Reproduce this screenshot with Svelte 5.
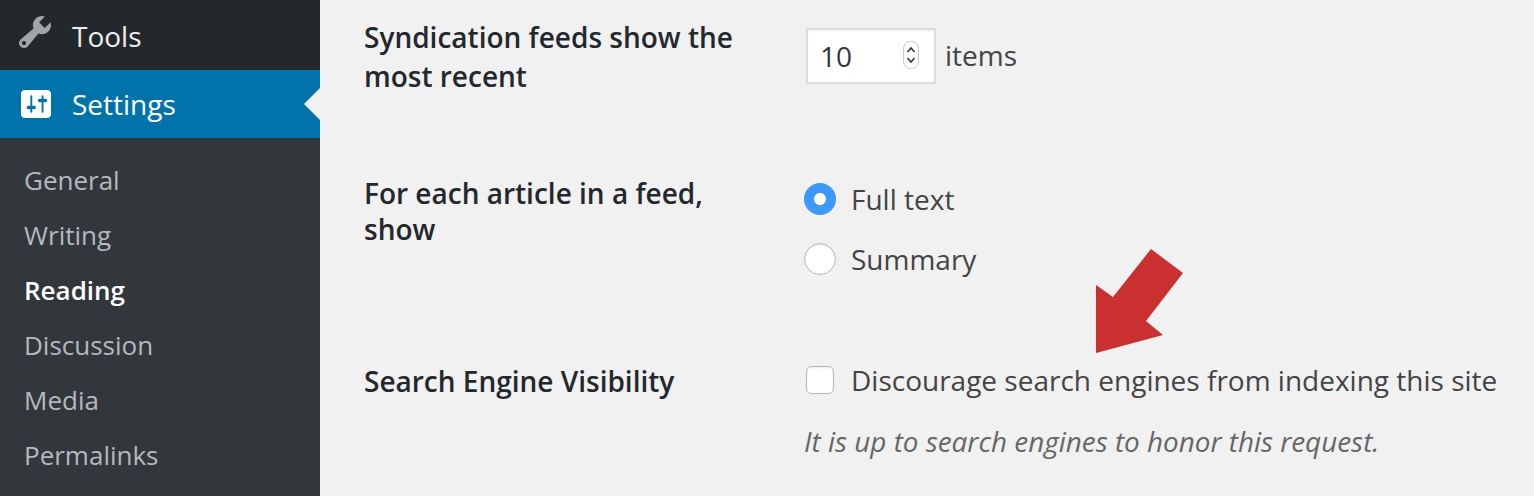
<script>
  const submenu = ['General', 'Writing', 'Reading', 'Discussion', 'Media', 'Permalinks'];
  let feedMode = $state('full');
</script>

<div class="page">
  <aside class="sidebar">
    <div class="menu-item tools">
      <svg class="ico ico-tools" viewBox="0 0 20 20"><path d="M16.68 9.77c-1.34 1.34-3.3 1.67-4.95.99l-5.41 6.52c-.99.99-2.59.99-3.58 0s-.99-2.59 0-3.57l6.52-5.42c-.68-1.65-.35-3.61.99-4.95 1.28-1.28 3.12-1.62 4.72-1.06l-2.89 2.89 2.82 2.82 2.86-2.87c.53 1.58.18 3.39-1.08 4.65zM3.81 16.21c.4.39 1.04.39 1.43 0 .4-.4.4-1.04 0-1.43-.39-.4-1.03-.4-1.43 0-.39.39-.39 1.03 0 1.43z"/></svg>
      <span>Tools</span>
    </div>
    <div class="menu-item settings">
      <svg class="ico ico-settings" viewBox="2 2 16 16" preserveAspectRatio="none"><path d="M18 16V4c0-1.1-.9-2-2-2H4c-1.1 0-2 .9-2 2v12c0 1.1.9 2 2 2h12c1.1 0 2-.9 2-2zM8 11h1c.55 0 1 .45 1 1s-.45 1-1 1H8v1.5c0 .28-.22.5-.5.5s-.5-.22-.5-.5V13H6c-.55 0-1-.45-1-1s.45-1 1-1h1V5.5c0-.28.22-.5.5-.5s.5.22.5.5V11zm5-2h-1c-.55 0-1-.45-1-1s.45-1 1-1h1V5.5c0-.28.22-.5.5-.5s.5.22.5.5V7h1c.55 0 1 .45 1 1s-.45 1-1 1h-1v5.5c0 .28-.22.5-.5.5s-.5-.22-.5-.5V9z"/></svg>
      <span>Settings</span>
      <i class="notch"></i>
    </div>
    <ul class="submenu">
      {#each submenu as item}
        <li class:current={item === 'Reading'}>{item}</li>
      {/each}
    </ul>
  </aside>

  <main class="content">
    <div class="row row-feeds">
      <div class="label">Syndication feeds show the most recent</div>
      <div class="field feeds">
        <div class="number">
          <input type="text" value="10" aria-label="Posts in feed" />
          <svg class="spin" viewBox="0 0 16 28">
            <rect x="0.5" y="0.5" width="15" height="27" rx="7" fill="#fff" stroke="#c9c9c9" />
            <path d="M4.5 11 8 7l3.500 4M4.500 17 8 21l3.500-4" fill="none" stroke="#333" stroke-width="1.500" />
          </svg>
        </div>
        <span>items</span>
      </div>
    </div>

    <div class="row row-article">
      <div class="label">For each article in a feed, show</div>
      <div class="field options">
        <label><input type="radio" name="mode" value="full" bind:group={feedMode} />Full text</label>
        <label><input type="radio" name="mode" value="summary" bind:group={feedMode} />Summary</label>
      </div>
    </div>

    <div class="row row-search">
      <div class="label">Search Engine Visibility</div>
      <div class="field">
        <label class="check"><input type="checkbox" />Discourage search engines from indexing this site</label>
        <p class="desc">It is up to search engines to honor this request.</p>
      </div>
    </div>

    <svg class="arrow" viewBox="0 0 90 108"><polygon points="55,1 87,25 50,73 67,87 0,105 0,37 17,49" fill="#c9302f" /></svg>
  </main>
</div>

<style>
  :global(body) {
    margin: 0;
    background: #f1f1f1;
  }
  .page {
    display: flex;
    height: 496px;
    overflow: hidden;
    font-family: "Open Sans", sans-serif;
    font-size: 28px;
    color: #444;
  }
  .sidebar {
    flex: 0 0 320px;
    background: #32373c;
  }
  .menu-item {
    position: relative;
    display: flex;
    align-items: center;
    padding-left: 72px;
    color: #eee;
  }
  .tools {
    height: 70px;
    box-sizing: border-box;
    padding-top: 2px;
    background: #23282d;
  }
  .settings {
    height: 68px;
    background: #0073aa;
    color: #fff;
  }
  .ico {
    position: absolute;
  }
  .ico-tools {
    left: 15px;
    top: 12px;
    width: 40px;
    height: 40px;
    fill: #a0a5aa;
  }
  .ico-settings {
    left: 21px;
    top: 20px;
    width: 30px;
    height: 28px;
    fill: #fff;
  }
  .notch {
    position: absolute;
    right: 0;
    top: 18px;
    border: 16px solid transparent;
    border-left-width: 0;
    border-right-color: #f1f1f1;
  }
  .submenu {
    list-style: none;
    margin: 0;
    padding: 14.6px 0 0 24px;
    font-size: 26px;
    color: #b4b9be;
  }
  .submenu li {
    height: 55.15px;
    line-height: 55.15px;
  }
  .submenu .current {
    color: #fff;
    font-weight: 600;
  }
  .content {
    position: relative;
    flex: 1;
    padding-left: 44px;
  }
  .row {
    display: grid;
    grid-template-columns: 440px 1fr;
  }
  .label {
    font-weight: 600;
    color: #23282d;
    line-height: 39px;
    width: 380px;
  }
  .row-feeds {
    padding-top: 18px;
    height: 175px;
    box-sizing: border-box;
  }
  .row-article {
    height: 187px;
  }
  .row-article .label {
    line-height: 36px;
  }
  .feeds {
    display: flex;
    align-items: flex-start;
    gap: 9px;
    padding-top: 10px;
    line-height: 54px;
  }
  .number {
    position: relative;
    margin-left: 2px;
    width: 130px;
    height: 56px;
  }
  .number input {
    box-sizing: border-box;
    width: 100%;
    height: 100%;
    padding: 0 0 0 12px;
    border: 2px solid #ddd;
    background: #fff;
    box-shadow: inset 0 1px 2px rgba(0, 0, 0, .07);
    font: inherit;
    color: #32373c;
    outline: none;
  }
  .spin {
    position: absolute;
    left: 97px;
    top: 13px;
    width: 16px;
    height: 28px;
  }
  .options {
    display: flex;
    flex-direction: column;
    gap: 24px;
    padding-top: 6px;
  }
  label {
    display: flex;
    align-items: center;
    line-height: 36px;
  }
  input[type="radio"],
  input[type="checkbox"] {
    appearance: none;
    box-sizing: border-box;
    flex: none;
    width: 32px;
    height: 32px;
    margin: 0 15px 0 0;
    background: #fff;
    border: 1px solid #b4b9be;
    box-shadow: inset 0 1px 2px rgba(0, 0, 0, .1);
  }
  input[type="radio"] {
    border-radius: 50%;
  }
  input[type="radio"]:checked {
    border: 0;
    background: radial-gradient(circle, #fff 0 5.500px, #3b99fc 6.500px);
    box-shadow: none;
  }
  input[type="checkbox"] {
    width: 28px;
    height: 28px;
    margin: 0 17px 0 2px;
    border-radius: 5px;
  }
  .desc {
    margin: 25px 0 0;
    line-height: 36px;
    font-size: 27.86px;
    font-style: italic;
    color: #666;
  }
  .arrow {
    position: absolute;
    left: 776px;
    top: 247.5px;
    width: 90px;
    height: 108px;
  }
</style>
